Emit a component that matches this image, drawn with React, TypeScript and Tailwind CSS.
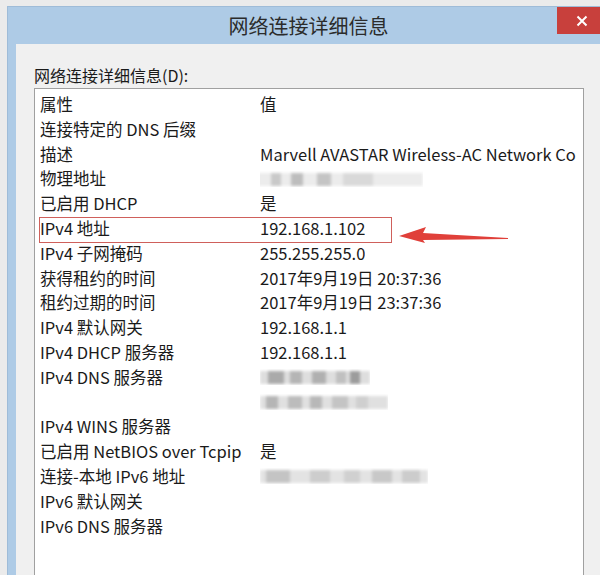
import React from 'react';

type Row = { name: string; value?: React.ReactNode };

const Blur = ({ w, blocks }: { w: number; blocks: [number, number, string][] }) => (
  <div className="relative h-[16px] blur-[1.5px]" style={{ width: w }}>
    {blocks.map(([l, bw, c], i) => (
      <div key={i} className="absolute top-[2px] h-[13px]" style={{ left: l, width: bw, background: c }} />
    ))}
  </div>
);

const rows: Row[] = [
  { name: '连接特定的 DNS 后缀' },
  { name: '描述', value: 'Marvell AVASTAR Wireless-AC Network Co' },
  {
    name: '物理地址',
    value: (
      <div className="-ml-[7px]">
        <Blur w={170} blocks={[[0, 170, '#ececec'], [18, 10, '#c9c9c9'], [38, 12, '#bdbdbd'], [64, 14, '#c4c4c4'], [90, 30, '#d9d9d9']]} />
      </div>
    ),
  },
  { name: '已启用 DHCP', value: '是' },
  { name: 'IPv4 地址', value: '192.168.1.102' },
  { name: 'IPv4 子网掩码', value: '255.255.255.0' },
  { name: '获得租约的时间', value: '2017年9月19日 20:37:36' },
  { name: '租约过期的时间', value: '2017年9月19日 23:37:36' },
  { name: 'IPv4 默认网关', value: '192.168.1.1' },
  { name: 'IPv4 DHCP 服务器', value: '192.168.1.1' },
  {
    name: 'IPv4 DNS 服务器',
    value: <Blur w={110} blocks={[[0, 110, '#dedede'], [8, 16, '#aaaaaa'], [30, 12, '#b5b5b5'], [52, 14, '#b0b0b0'], [76, 10, '#c0c0c0'], [90, 10, '#9c9c9c']]} />,
  },
  {
    name: '',
    value: <Blur w={128} blocks={[[0, 128, '#e0e0e0'], [6, 12, '#b5b5b5'], [28, 14, '#bcbcbc'], [50, 12, '#b8b8b8'], [72, 16, '#c4c4c4'], [96, 12, '#cfcfcf']]} />,
  },
  { name: 'IPv4 WINS 服务器' },
  { name: '已启用 NetBIOS over Tcpip', value: '是' },
  {
    name: '连接-本地 IPv6 地址',
    value: <Blur w={168} blocks={[[0, 168, '#e3e3e3'], [6, 24, '#c4c4c4'], [50, 20, '#cdcdcd'], [84, 16, '#d0d0d0'], [112, 20, '#c8c8c8'], [142, 18, '#cccccc']]} />,
  },
  { name: 'IPv6 默认网关' },
  { name: 'IPv6 DNS 服务器' },
];

export default function App() {
  return (
    <div
      className="w-[600px] h-[575px] overflow-hidden bg-[#ebebeb] pt-[6px] pl-[7px] text-[#1a1a1a]"
      style={{ fontFamily: '"Noto Sans CJK SC", "Noto Sans", sans-serif' }}
    >
      <div className="w-[640px] h-[600px] bg-[#aecbe6] border-t border-l border-[#9fbcd8] flex flex-col">
        {/* title bar */}
        <div className="relative h-[37px] shrink-0 flex items-center justify-center">
          <span className="text-[20px] text-[#2b2b2b] ml-[-38px] leading-none">网络连接详细信息</span>
          <div className="absolute left-[549px] top-0 w-[50px] h-[27px] bg-[#c8403c] flex items-center justify-center">
            <svg width="12" height="12" viewBox="0 0 12 12">
              <path d="M1.5 1.5 L10.5 10.5 M10.5 1.5 L1.5 10.5" stroke="#fff" strokeWidth="2" />
            </svg>
          </div>
        </div>
        {/* body */}
        <div className="ml-[8px] flex-1 bg-[#f0f0f0] pl-[18px] pt-[20px]">
          <div className="text-[16px] leading-[22px] h-[24px]">网络连接详细信息(D):</div>
          <div className="relative w-[550px] h-[520px] bg-white border border-[#a0a0a0] pt-[3px] overflow-hidden">
            <div className="flex h-[24.8px] items-center text-[16.5px]">
              <div className="w-[225px] pl-[5px] shrink-0">属性</div>
              <div>值</div>
            </div>
            {rows.map((r, i) => (
              <div key={i} className="relative flex h-[24.8px] items-center text-[16.5px] whitespace-nowrap">
                <div className="w-[225px] pl-[5px] shrink-0">{r.name}</div>
                <div className="overflow-hidden">{r.value}</div>
                {i === 4 && (
                  <>
                    <div className="absolute left-[4px] top-[1px] w-[353px] h-[26px] border border-[#cf605b]" />
                    <svg className="absolute left-[364px] top-[10px] overflow-visible" width="112" height="20" viewBox="0 0 112 20">
                      <polygon points="0,10 27,1 24,7 109,12 109,13 24,14 26,17" fill="#e0403a" />
                    </svg>
                  </>
                )}
              </div>
            ))}
          </div>
        </div>
      </div>
    </div>
  );
}
